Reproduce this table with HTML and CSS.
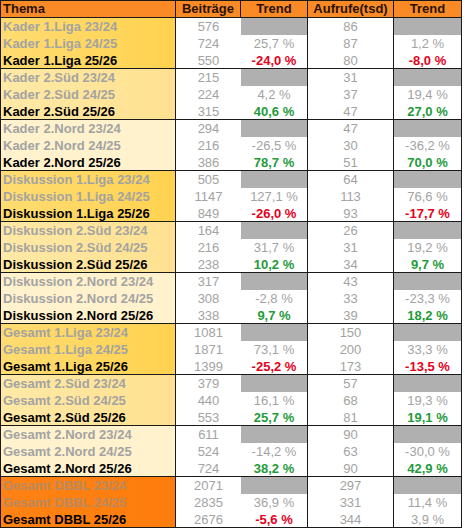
FILE: index.html
```html
<!DOCTYPE html>
<html>
<head>
    <title>Statistik Beiträge und Aufrufe</title>
    <link rel="stylesheet" href="styles.css">
</head>
<body>

<table class="stats">
    <thead>
        <tr>
            <th class="col-topic">Thema</th>
            <th class="col-num sep">Beiträge</th>
            <th class="col-trend">Trend</th>
            <th class="col-views">Aufrufe(tsd)</th>
            <th class="col-trend2">Trend</th>
        </tr>
    </thead>
    <tbody id="rows"></tbody>
</table>

<script>
/*
 * One entry per topic group: three seasons each.
 * Trend values: [text, colour class] for the second and third season.
 */
const groups = [
    { name: 'Kader 1.Liga', tone: 'liga', posts: [576, 724, 550], t1: [['25,7 %', ''], ['-24,0 %', 'neg']], views: [86, 87, 80], t2: [['1,2 %', ''], ['-8,0 %', 'neg']] },
    { name: 'Kader 2.Süd', tone: 'sued', posts: [215, 224, 315], t1: [['4,2 %', ''], ['40,6 %', 'pos']], views: [31, 37, 47], t2: [['19,4 %', ''], ['27,0 %', 'pos']] },
    { name: 'Kader 2.Nord', tone: 'nord', posts: [294, 216, 386], t1: [['-26,5 %', ''], ['78,7 %', 'pos']], views: [47, 30, 51], t2: [['-36,2 %', ''], ['70,0 %', 'pos']] },
    { name: 'Diskussion 1.Liga', tone: 'liga', posts: [505, 1147, 849], t1: [['127,1 %', ''], ['-26,0 %', 'neg']], views: [64, 113, 93], t2: [['76,6 %', ''], ['-17,7 %', 'neg']] },
    { name: 'Diskussion 2.Süd', tone: 'sued', posts: [164, 216, 238], t1: [['31,7 %', ''], ['10,2 %', 'pos']], views: [26, 31, 34], t2: [['19,2 %', ''], ['9,7 %', 'pos']] },
    { name: 'Diskussion 2.Nord', tone: 'nord', posts: [317, 308, 338], t1: [['-2,8 %', ''], ['9,7 %', 'pos']], views: [43, 33, 39], t2: [['-23,3 %', ''], ['18,2 %', 'pos']] },
    { name: 'Gesamt 1.Liga', tone: 'liga', posts: [1081, 1871, 1399], t1: [['73,1 %', ''], ['-25,2 %', 'neg']], views: [150, 200, 173], t2: [['33,3 %', ''], ['-13,5 %', 'neg']] },
    { name: 'Gesamt 2.Süd', tone: 'sued', posts: [379, 440, 553], t1: [['16,1 %', ''], ['25,7 %', 'pos']], views: [57, 68, 81], t2: [['19,3 %', ''], ['19,1 %', 'pos']] },
    { name: 'Gesamt 2.Nord', tone: 'nord', posts: [611, 524, 724], t1: [['-14,2 %', ''], ['38,2 %', 'pos']], views: [90, 63, 90], t2: [['-30,0 %', ''], ['42,9 %', 'pos']] },
    { name: 'Gesamt DBBL', tone: 'dbbl', posts: [2071, 2835, 2676], t1: [['36,9 %', ''], ['-5,6 %', 'neg']], views: [297, 331, 344], t2: [['11,4 %', ''], ['3,9 %', 'flat']] }
];

const seasons = ['23/24', '24/25', '25/26'];
let html = '';

for (const g of groups) {
    for (let i = 0; i < 3; i++) {
        let cls = i === 2 ? 'current group-end' : 'old';
        let trend1 = i === 0 ? '<td class="col-trend empty"></td>'
            : `<td class="col-trend ${g.t1[i - 1][1]}">${g.t1[i - 1][0]}</td>`;
        let trend2 = i === 0 ? '<td class="col-trend2 empty"></td>'
            : `<td class="col-trend2 ${g.t2[i - 1][1]}">${g.t2[i - 1][0]}</td>`;
        html += `
            <tr class="${cls}">
                <td class="col-topic ${g.tone}">${g.name} ${seasons[i]}</td>
                <td class="col-num">${g.posts[i]}</td>
                ${trend1}
                <td class="col-views">${g.views[i]}</td>
                ${trend2}
            </tr>
        `;
    }
}

document.getElementById('rows').innerHTML = html;
</script>

</body>
</html>
```

FILE: styles.css
```css
body {
    margin: 0;
    background: #fff;
    font-family: "Liberation Sans", Arial, sans-serif;
}
.stats {
    border-collapse: separate;
    border-spacing: 0;
    table-layout: fixed;
    width: 462px;
    font-size: 13px;
}
.stats th, .stats td {
    box-sizing: border-box;
    height: 17px;
    padding: 0;
    line-height: 16px;
    text-align: center;
    white-space: nowrap;
    overflow: hidden;
}
.stats th {
    height: 18px;
    background-color: #fa8a25;
    color: #2a1200;
    font-weight: bold;
    border-top: 1px solid #1a1a1a;
    border-bottom: 1px solid #1a1a1a;
}
.col-topic {
    width: 176px;
    text-align: left !important;
    padding-left: 2px !important;
    border-left: 1px solid #1a1a1a;
    border-right: 1px solid #1a1a1a;
}
.col-num {
    width: 65px;
}
.col-trend {
    width: 67px;
    border-right: 1px solid #1a1a1a;
}
.col-views {
    width: 86px;
    border-right: 1px solid #1a1a1a;
}
.col-trend2 {
    width: 68px;
    border-right: 1px solid #1a1a1a;
}
.stats th.sep {
    border-right: 1px solid #1a1a1a;
}
.stats td {
    color: #a3a3a3;
}
.group-end td {
    border-bottom: 1px solid #1a1a1a;
    line-height: 15px;
}
.stats td.col-topic {
    font-weight: bold;
}
.current td.col-topic {
    color: #000;
}
.liga {
    background: linear-gradient(to right, #ffdc72, #ffd24f);
}
.sued {
    background: linear-gradient(to right, #ffe9a6, #ffe190);
}
.nord {
    background: #fff2cd;
}
.dbbl {
    background: linear-gradient(to right, #ff8214, #fd7d0c);
}
.old td.dbbl {
    color: #b88a60;
}
.empty {
    background-color: #b0b0b0;
}
.stats td.pos {
    color: #1f9b3c;
    font-weight: bold;
}
.stats td.neg {
    color: #e6001a;
    font-weight: bold;
}
```
